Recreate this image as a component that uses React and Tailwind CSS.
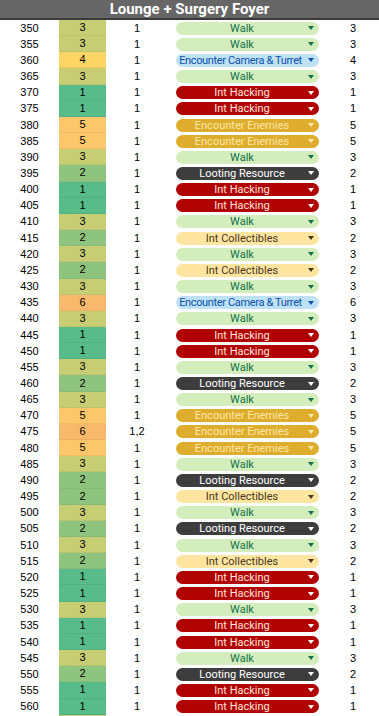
import React from 'react';

// Warna skala untuk kolom nilai (gaya skala warna spreadsheet)
const scaleColors = {
  1: 'bg-[#57bb8a]',
  2: 'bg-[#8fc47e]',
  3: 'bg-[#c7cd73]',
  4: 'bg-[#ffd666]',
  5: 'bg-[#fbc76a]',
  6: 'bg-[#f7b96b]',
};

const chipStyles = {
  'Walk': { pill: 'bg-[#d4edbc] text-[#11734b]', arrow: 'border-t-[#11734b]' },
  'Encounter Camera & Turret': { pill: 'bg-[#bfe1f6] text-[#0a53a8]', arrow: 'border-t-[#0a53a8]', tight: true },
  'Int Hacking': { pill: 'bg-[#b10202] text-[#ffe3df]', arrow: 'border-t-[#ffffff]' },
  'Encounter Enemies': { pill: 'bg-[#dfad2d] text-[#fde7a6]', arrow: 'border-t-[#fde7a6]' },
  'Looting Resource': { pill: 'bg-[#3d3d3d] text-white', arrow: 'border-t-[#ffffff]' },
  'Int Collectibles': { pill: 'bg-[#ffe5a0] text-[#473821]', arrow: 'border-t-[#473821]' },
};

const rows = [
  [350, 3, '1', 'Walk', 3],
  [355, 3, '1', 'Walk', 3],
  [360, 4, '1', 'Encounter Camera & Turret', 4],
  [365, 3, '1', 'Walk', 3],
  [370, 1, '1', 'Int Hacking', 1],
  [375, 1, '1', 'Int Hacking', 1],
  [380, 5, '1', 'Encounter Enemies', 5],
  [385, 5, '1', 'Encounter Enemies', 5],
  [390, 3, '1', 'Walk', 3],
  [395, 2, '1', 'Looting Resource', 2],
  [400, 1, '1', 'Int Hacking', 1],
  [405, 1, '1', 'Int Hacking', 1],
  [410, 3, '1', 'Walk', 3],
  [415, 2, '1', 'Int Collectibles', 2],
  [420, 3, '1', 'Walk', 3],
  [425, 2, '1', 'Int Collectibles', 2],
  [430, 3, '1', 'Walk', 3],
  [435, 6, '1', 'Encounter Camera & Turret', 6],
  [440, 3, '1', 'Walk', 3],
  [445, 1, '1', 'Int Hacking', 1],
  [450, 1, '1', 'Int Hacking', 1],
  [455, 3, '1', 'Walk', 3],
  [460, 2, '1', 'Looting Resource', 2],
  [465, 3, '1', 'Walk', 3],
  [470, 5, '1', 'Encounter Enemies', 5],
  [475, 6, '1,2', 'Encounter Enemies', 5],
  [480, 5, '1', 'Encounter Enemies', 5],
  [485, 3, '1', 'Walk', 3],
  [490, 2, '1', 'Looting Resource', 2],
  [495, 2, '1', 'Int Collectibles', 2],
  [500, 3, '1', 'Walk', 3],
  [505, 2, '1', 'Looting Resource', 2],
  [510, 3, '1', 'Walk', 3],
  [515, 2, '1', 'Int Collectibles', 2],
  [520, 1, '1', 'Int Hacking', 1],
  [525, 1, '1', 'Int Hacking', 1],
  [530, 3, '1', 'Walk', 3],
  [535, 1, '1', 'Int Hacking', 1],
  [540, 1, '1', 'Int Hacking', 1],
  [545, 3, '1', 'Walk', 3],
  [550, 2, '1', 'Looting Resource', 2],
  [555, 1, '1', 'Int Hacking', 1],
  [560, 1, '1', 'Int Hacking', 1],
];

const Chip = ({ label }) => {
  const style = chipStyles[label];
  return (
    <div className={`mx-[8px] h-[13px] rounded-full flex items-center ${style.pill}`}>
      <span
        className={`flex-1 text-center leading-none text-[11px] font-['Roboto',sans-serif] whitespace-nowrap ${
          style.tight ? 'pl-[2px] tracking-[-0.35px]' : 'pl-[5px]'
        }`}
      >
        {label}
      </span>
      <span className="w-[16px] flex justify-center shrink-0">
        <span className={`w-0 h-0 border-l-[3.5px] border-r-[3.5px] border-t-[4px] border-l-transparent border-r-transparent ${style.arrow}`}></span>
      </span>
    </div>
  );
};

export default function App() {
  return (
    <div className="w-[379px] h-[716px] overflow-hidden bg-white font-['Liberation_Sans',Arial,sans-serif] text-[11px] text-black">
      {/* Header */}
      <div className="h-[18px] bg-[#666666] flex items-center justify-center border-b-2 border-[#3a3a3a] box-content">
        <span className="text-white font-bold text-[15px] leading-none font-['Roboto',sans-serif]">
          Lounge + Surgery Foyer
        </span>
      </div>

      {/* Baris data */}
      <div>
        {rows.map(([pos, val, grp, action, last]) => (
          <div key={pos} className="grid grid-cols-[59px_47px_62px_159px_52px] h-[16.16px] items-center">
            <div className="text-center leading-none">{pos}</div>
            <div className={`h-full flex items-center justify-center border-b border-black/5 ${scaleColors[val]}`}>
              <span className="leading-none">{val}</span>
            </div>
            <div className="text-center leading-none">{grp}</div>
            <Chip label={action} />
            <div className="text-center leading-none">{last}</div>
          </div>
        ))}
        {/* baris berikutnya yang terpotong di bawah */}
        <div className="grid grid-cols-[59px_47px_62px_159px_52px] h-[16.16px]">
          <div></div>
          <div className={scaleColors[3]}></div>
        </div>
      </div>
    </div>
  );
}
